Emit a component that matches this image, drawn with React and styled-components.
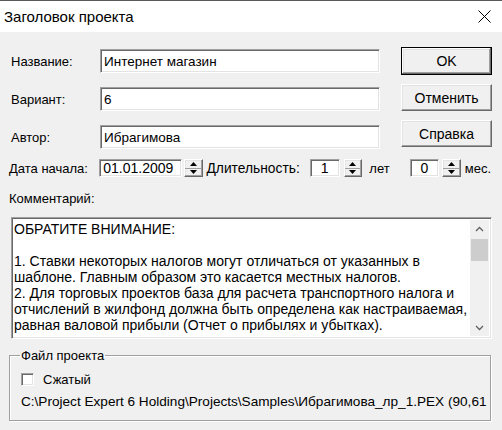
import styled, { createGlobalStyle } from 'styled-components'

const GlobalStyle = createGlobalStyle`
	html, body {
		margin: 0;
		padding: 0;
		background: #f0f0f0;
	}
	body {
		font-family: 'Liberation Sans', Arial, sans-serif;
		font-size: 13px;
		color: #000;
	}
	* { box-sizing: border-box; }
`

const sunken = `
	border: 1px solid;
	border-color: #a0a0a0 #ffffff #ffffff #a0a0a0;
	box-shadow: inset 1px 1px 0 #696969, inset -1px -1px 0 #e3e3e3;
	background: #fff;
`

const raised = `
	border: 1px solid;
	border-color: #ffffff #696969 #696969 #ffffff;
	box-shadow: inset -1px -1px 0 #a0a0a0, inset 1px 1px 0 #e3e3e3;
	background: #f0f0f0;
`

const Window = styled.div`
	width: 502px;
	height: 430px;
	display: flex;
	flex-direction: column;
	overflow: hidden;
	background: #f0f0f0;
`

const TitleBar = styled.div`
	height: 32px;
	border-top: 1px solid #5a5a5a;
	background: #fff;
	display: flex;
	align-items: center;
	justify-content: space-between;
	padding: 0 11px 1px 4px;
	font-family: 'Liberation Sans', Arial, sans-serif;
	font-size: 15px;
`

const Body = styled.div`
	flex: 1;
	padding: 15px 11px 0 9px;
	display: flex;
	flex-direction: column;
`

const TopSection = styled.div`
	display: flex;
	align-items: flex-start;
`

const FieldGrid = styled.div`
	display: grid;
	grid-template-columns: 91px 280px;
	row-gap: 14px;
	align-items: center;
	margin-top: 2px;
`

const FieldLabel = styled.div`
	padding-left: 2px;
	line-height: 15px;
`

const TextInput = styled.div`
	${sunken}
	height: 24px;
	display: flex;
	align-items: center;
	padding: 0 3px;
	font-size: 13.5px;
	white-space: nowrap;
`

const ButtonColumn = styled.div`
	display: flex;
	flex-direction: column;
	gap: 9px;
	margin-left: 21px;
`

const DialogButton = styled.button`
	${raised}
	width: 91px;
	height: ${p => (p.$default ? 28 : 27)}px;
	padding: 0;
	font-family: inherit;
	font-size: 14px;
	color: #000;
	${p =>
		p.$default &&
		`
		border: 1px solid #000;
		box-shadow: inset -1px -1px 0 #696969, inset 1px 1px 0 #fff, inset -2px -2px 0 #a0a0a0, inset 2px 2px 0 #e3e3e3;
	`}
`

const DateRow = styled.div`
	display: flex;
	align-items: center;
	height: 18px;
	margin-top: 10px;
`

const RowLabel = styled.div`
	width: ${p => (p.$w ? `${p.$w}px` : 'auto')};
	margin-left: ${p => p.$ml || 0}px;
	font-size: ${p => p.$size || 13}px;
	line-height: 15px;
	white-space: nowrap;
`

const SpinInput = styled.div`
	${sunken}
	width: ${p => p.$w}px;
	height: 18px;
	padding: 0 3px;
	font-size: 14px;
	line-height: 16px;
	text-align: ${p => p.$align || 'left'};
`

const Spinner = styled.div`
	${raised}
	width: 19px;
	height: 18px;
	margin-left: ${p => p.$ml || 0}px;
	display: flex;
	flex-direction: column;
`

const SpinHalf = styled.div`
	flex: 1;
	display: flex;
	align-items: center;
	justify-content: center;
	border-bottom: ${p => (p.$top ? '1px solid #a0a0a0' : 'none')};
`

const CommentLabel = styled.div`
	margin-top: 14px;
	line-height: 15px;
`

const Memo = styled.div`
	${sunken}
	width: 481px;
	height: 122px;
	margin: 11px 0 0 2px;
	display: flex;
	overflow: hidden;
	padding: 2px;
`

const MemoText = styled.div`
	flex: 1;
	font-size: 14px;
	line-height: 16px;
	padding-top: 1px;
	white-space: pre;
	overflow: hidden;
`

const ScrollBar = styled.div`
	width: 19px;
	background: #f0f0f0;
	display: flex;
	flex-direction: column;
`

const ScrollArrow = styled.div`
	height: 17px;
	display: flex;
	align-items: center;
	justify-content: center;
`

const ScrollThumb = styled.div`
	height: 22px;
	margin: 2px 1px 0;
	background: #cdcdcd;
`

const ScrollTrack = styled.div`
	flex: 1;
`

const GroupBox = styled.fieldset`
	margin: 9px 0 0 0;
	padding: 0 10px 11px;
	width: 482px;
	min-width: 0;
	border: 1px solid #a0a0a0;
	box-shadow: inset 1px 1px 0 #fff, 1px 1px 0 #fff;
`

const Legend = styled.legend`
	padding: 0 1px;
	line-height: 15px;
`

const CheckRow = styled.label`
	display: flex;
	align-items: center;
	gap: 9px;
	height: 15px;
	margin-top: 9px;
	padding-left: 1px;
`

const CheckBox = styled.span`
	${sunken}
	width: 13px;
	height: 13px;
`

const PathText = styled.div`
	margin-top: 7px;
	padding-left: 1px;
	font-size: 13.6px;
	line-height: 15px;
	white-space: nowrap;
`

const CloseIcon = () => (
	<svg width="13" height="13" viewBox="0 0 13 13">
		<path d="M0.5 0.5 L12.5 12.5 M12.5 0.5 L0.5 12.5" stroke="#000" strokeWidth="1" />
	</svg>
)

const Arrow = ({ up }) => (
	<svg width="7" height="4" viewBox="0 0 7 4">
		<path d={up ? 'M3.5 0 L7 4 L0 4 Z' : 'M0 0 L7 0 L3.5 4 Z'} fill="#000" />
	</svg>
)

const Chevron = ({ up }) => (
	<svg width="9" height="6" viewBox="0 0 9 6">
		<path
			d={up ? 'M1 5 L4.5 1.5 L8 5' : 'M1 1 L4.5 4.5 L8 1'}
			stroke="#606060"
			strokeWidth="1.3"
			fill="none"
		/>
	</svg>
)

const Spin = ({ ml }) => (
	<Spinner $ml={ml}>
		<SpinHalf $top>
			<Arrow up />
		</SpinHalf>
		<SpinHalf>
			<Arrow />
		</SpinHalf>
	</Spinner>
)

const memoLines = [
	'ОБРАТИТЕ ВНИМАНИЕ:',
	'',
	'1. Ставки некоторых налогов могут отличаться от указанных в',
	'шаблоне. Главным образом это касается местных налогов.',
	'2. Для торговых проектов база для расчета транспортного налога и',
	'отчислений в жилфонд должна быть определена как настраиваемая,',
	'равная валовой прибыли (Отчет о прибылях и убытках).',
]

const App = () => {
	return (
		<Window>
			<GlobalStyle />
			<TitleBar>
				<span>Заголовок проекта</span>
				<CloseIcon />
			</TitleBar>
			<Body>
				<TopSection>
					<FieldGrid>
						<FieldLabel>Название:</FieldLabel>
						<TextInput>Интернет магазин</TextInput>
						<FieldLabel>Вариант:</FieldLabel>
						<TextInput>6</TextInput>
						<FieldLabel>Автор:</FieldLabel>
						<TextInput>Ибрагимова</TextInput>
					</FieldGrid>
					<ButtonColumn>
						<DialogButton $default>OK</DialogButton>
						<DialogButton>Отменить</DialogButton>
						<DialogButton>Справка</DialogButton>
					</ButtonColumn>
				</TopSection>

				<DateRow>
					<RowLabel $w={91}>Дата начала:</RowLabel>
					<SpinInput $w={83}>01.01.2009</SpinInput>
					<Spin ml={2} />
					<RowLabel $w={104} $ml={4} $size={13.8}>Длительность:</RowLabel>
					<SpinInput $w={30} $align="center">1</SpinInput>
					<Spin ml={4} />
					<RowLabel $w={41} $ml={7}>лет</RowLabel>
					<SpinInput $w={29} $align="center">0</SpinInput>
					<Spin ml={3} />
					<RowLabel $ml={4}>мес.</RowLabel>
				</DateRow>

				<CommentLabel>Комментарий:</CommentLabel>
				<Memo>
					<MemoText>{memoLines.join('\n')}</MemoText>
					<ScrollBar>
						<ScrollArrow>
							<Chevron up />
						</ScrollArrow>
						<ScrollThumb />
						<ScrollTrack />
						<ScrollArrow>
							<Chevron />
						</ScrollArrow>
					</ScrollBar>
				</Memo>

				<GroupBox>
					<Legend>Файл проекта</Legend>
					<CheckRow>
						<CheckBox />
						Сжатый
					</CheckRow>
					<PathText>
						C:\Project Expert 6 Holding\Projects\Samples\Ибрагимова_лр_1.PEX (90,61
					</PathText>
				</GroupBox>
			</Body>
		</Window>
	)
}

export default App
